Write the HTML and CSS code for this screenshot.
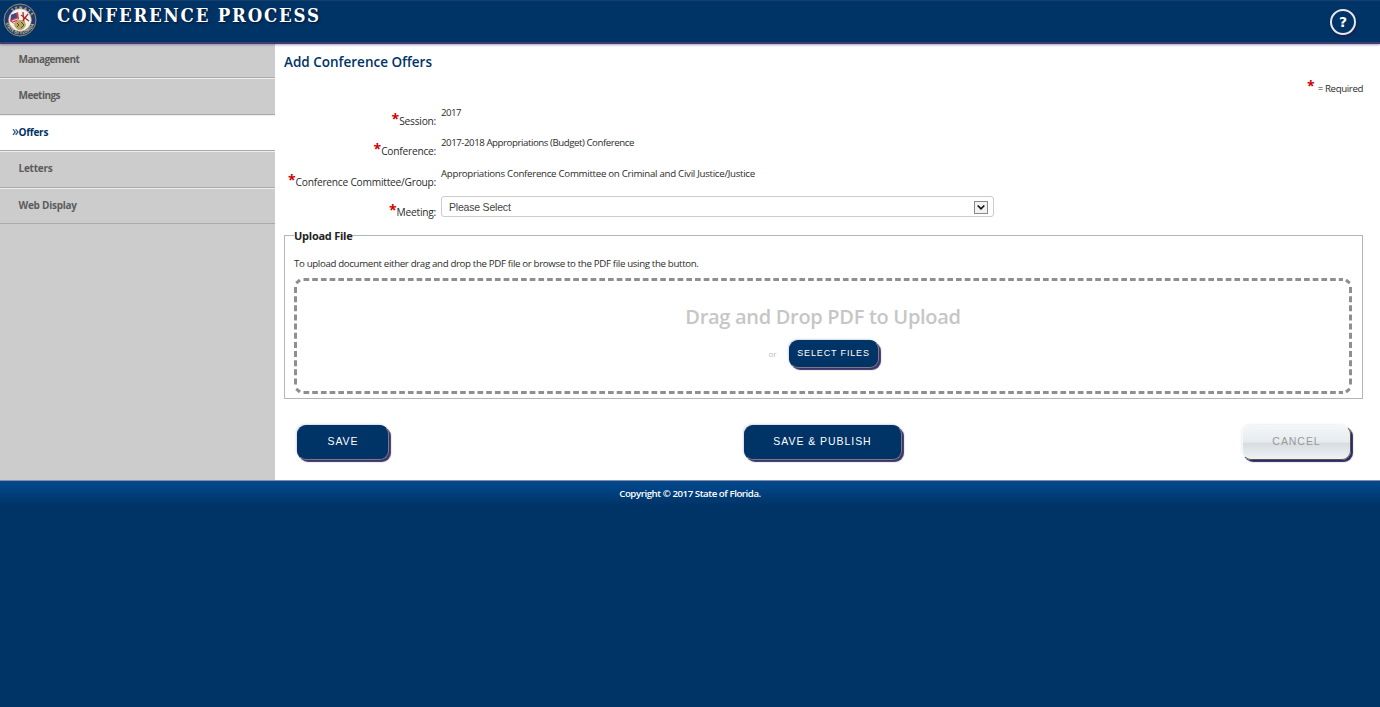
FILE: index.html
```html
<!DOCTYPE html>
<html lang="en">
<head>
<meta charset="utf-8">
<title>Conference Process</title>
<link rel="stylesheet" href="styles.css">
</head>
<body>
<header class="header">
  <svg class="seal" viewBox="0 0 34 34" width="34" height="34">
    <defs><path id="top" d="M4 19A13 13 0 1 1 30 19"/><path id="bottom" d="M2.600 20A14.800 14.800 0 0 0 31.400 20"/></defs>
    <circle cx="17" cy="17" r="16" fill="#1b3a78" stroke="#a28d5c" stroke-width="1"/>
    <text class="seal-text"><textPath href="#top" startOffset="12" textLength="22">SENATE</textPath></text>
    <text class="seal-text"><textPath href="#bottom" textLength="38">STATE OF FLORIDA</textPath></text>
    <circle cx="17" cy="17" r="11.300" fill="#f6f2ea" stroke="#c2ad78" stroke-width=".7"/>
    <path d="M8 12l7-3 1 7-5 5-4-3z" fill="#c8434b"/>
    <path d="M8 12l5-2 1 4-6 3z" fill="#394b8c"/>
    <path d="M9 18l6-2M10 20l6-2" stroke="#fff" stroke-width=".8"/>
    <path d="M20 9l1 12M25 11l-7 9M18 12l8 6" stroke="#b52632" stroke-width="1.300"/>
    <path d="M11 22q1-5 6-5t6 5q-2 5-6 5t-6-5z" fill="#b9a568"/>
    <path d="M14 20l2 2-2 2M18 19l3 3-3 3" stroke="#54502f" stroke-width="1" fill="none"/>
  </svg>
  <h1 class="title">CONFERENCE PROCESS</h1>
  <a class="help">?</a>
</header>
<div class="body">
  <nav class="nav">
    <a class="nav-item"><span class="tight">Management</span></a>
    <a class="nav-item"><span class="tight">Meetings</span></a>
    <a class="nav-item active"><i class="mark">»</i><span>Offers</span></a>
    <a class="nav-item"><span>Letters</span></a>
    <a class="nav-item"><span>Web Display</span></a>
  </nav>
  <main class="main">
    <h2 class="heading">Add Conference Offers</h2>
    <p class="required"><b class="star">*</b><span>= Required</span></p>
    <div class="form">
      <label class="label"><b class="star">*</b><span>Session:</span></label><span class="value digits">2017</span>
      <label class="label"><b class="star">*</b><span>Conference:</span></label><span class="value mixed">2017-2018 Appropriations (Budget) Conference</span>
      <label class="label"><b class="star">*</b><span>Conference Committee/Group:</span></label><span class="value">Appropriations Conference Committee on Criminal and Civil Justice/Justice</span>
      <label class="label"><b class="star">*</b><span>Meeting:</span></label>
      <div class="select"><span>Please Select</span>
        <svg width="14" height="13" viewBox="0 0 14 13"><rect x=".5" y=".5" width="13" height="12" fill="#f2f2f2" stroke="#8a8a8a"/><path d="M3.7 4.5L7 7.8l3.3-3.3" fill="none" stroke="#111" stroke-width="1.7"/></svg>
      </div>
    </div>
    <fieldset class="upload">
      <legend class="legend">Upload File</legend>
      <p class="hint">To upload document either drag and drop the PDF file or browse to the PDF file using the button.</p>
      <div class="drop">
        <svg class="dash" width="1058" height="116" fill="none" stroke="#8f8f8f" stroke-width="3">
          <path d="M9.5 1.5H1049" stroke-dasharray="5.7 3"/><path d="M9.5 114.500H1049" stroke-dasharray="5.7 3"/>
          <path d="M1.5 9V108" stroke-dasharray="6 3.15"/><path d="M1056.5 9V108" stroke-dasharray="6 3.15"/>
          <path d="M2.2 5.2L6 2M1052 2l3.8 3.2M2.2 110.800L6 114M1052 114l3.800-3.2"/>
        </svg>
        <div class="drop-title">Drag and Drop PDF to Upload</div>
        <div class="pick"><span>or</span><button class="btn small">SELECT FILES</button></div>
      </div>
    </fieldset>
    <div class="actions">
      <button class="btn save">SAVE</button>
      <button class="btn publish">SAVE &amp; PUBLISH</button>
      <button class="btn cancel">CANCEL</button>
    </div>
  </main>
</div>
<footer class="footer"><span>Copyright © 2017 State of Florida.</span></footer>
</body>
</html>
```
FILE: styles.css
```css
* { box-sizing: border-box; }
body { margin: 0; min-height: 707px; background: #003366; color: #2b2b2b; font: 9.7px/14px "Open Sans", "Noto Sans", sans-serif; overflow: hidden; }
h1, h2, p { margin: 0; }
.header { height: 44px; display: flex; align-items: flex-start; background: #003366; border-top: 1px solid #123f6e; border-bottom: 2px solid #423d70; box-shadow: 0 1px 2px #5c548b88; position: relative; z-index: 1; }
.seal { margin: 2px 0 0 3px; }
.seal-text { font: bold 4px "Open Sans", sans-serif; fill: #d8c68e; }
.title { margin: 3px 0 0 20px; color: #fff; font: bold 18.500px/24px "DejaVu Serif Condensed", "DejaVu Serif", serif; letter-spacing: 1.8px; text-shadow: 1px 1px 2px #001634; white-space: nowrap; }
.help { margin: 8px 24px 0 auto; width: 26px; height: 26px; border: 2px solid #e4e9ef; border-radius: 50%; color: #fff; font: bold 14px/23px "DejaVu Sans", sans-serif; text-align: center; box-shadow: 1px 2px 2px #1c1f50; }
.body { display: flex; height: 436px; }
.nav { width: 275px; background: #ccc; }
.nav-item { display: flex; height: 36.5px; padding: 8px 0 0 18.500px; border-bottom: 1px solid #aaa; border-top: 1.5px solid #eee; color: #5c5c5c; font-weight: 700; font-size: 10px; line-height: 17px; letter-spacing: -.25px; position: relative; }
.nav-item:first-child { height: 34px; padding-top: 7px; border-top: 0; }
.nav .tight { letter-spacing: -.55px; }
.nav-item.active { background: #fff; color: #003366; }
.mark { position: absolute; left: 12px; font-style: normal; font-weight: 400; font-size: 14px; top: 6px; }
.main { flex: 1; background: #fff; padding: 8px 17px 0 9px; }
.heading { color: #003366; font-size: 13.5px; line-height: 20px; font-weight: 600; }
.required { display: flex; justify-content: flex-end; margin-top: 9px; height: 24px; line-height: 16px; gap: 3px; letter-spacing: -.38px; }
.star { color: #d00000; font: bold 14px/14px "Open Sans", sans-serif; margin-top: -2px; letter-spacing: 0; }
.form { display: grid; grid-template-columns: 152px 553px; grid-auto-rows: 30.4px; column-gap: 5px; }
.label { display: flex; justify-content: flex-end; align-items: flex-start; padding-top: 9px; white-space: nowrap; font-size: 10.2px; letter-spacing: -.23px; }
.value { padding-top: 1px; white-space: nowrap; letter-spacing: -.28px; }
.digits { letter-spacing: -.55px; }
.mixed { letter-spacing: -.45px; }
.select { height: 21px; border: 1px solid #ccc; border-radius: 3px; display: flex; justify-content: space-between; align-items: center; padding: 1px 5px 0 7px; font: 10.500px "Liberation Sans", Arial, sans-serif; letter-spacing: -.2px; color: #444; }
.upload { margin: 1px 0 0; height: 171px; border: 1px solid #b5b5b5; padding: 14px 9px 0; min-width: 0; }
.legend { padding: 0; font-size: 11px; line-height: 15px; font-weight: 700; color: #222; letter-spacing: -.25px; }
.hint { height: 21px; line-height: 14px; white-space: nowrap; letter-spacing: -.34px; }
.drop { position: relative; height: 116px; width: 1058px; display: flex; flex-direction: column; align-items: center; padding-top: 25px; }
.dash { position: absolute; left: 0; top: 0; }
.drop-title { color: #c6c6c6; font-size: 20px; line-height: 28px; font-weight: 600; letter-spacing: -.3px; white-space: nowrap; }
.pick { display: flex; align-items: center; gap: 12px; margin: 9px 0 0 1px; color: #bbb; font-size: 8px; }
.btn { height: 35px; border: 1px solid #7c7885; border-top-color: #003366; border-left-color: #003366; border-radius: 9px; padding: 0 0 2px; background: #003366; color: #fff; font: 10.500px "Liberation Sans", Arial, sans-serif; letter-spacing: .95px; box-shadow: 2px 2px 1px #3a3468, -1px -1px 2px #d3dbe5; white-space: nowrap; }
.small { width: 90px; height: 28px; font-size: 9px; letter-spacing: .85px; }
.actions { display: flex; justify-content: space-between; margin: 26px 12px 0 13px; }
.save { width: 92px; }
.publish { width: 158px; margin-left: 14px; }
.cancel { width: 109px; color: #999; background: linear-gradient(#f3f6f8, #e7ebee 49%, #d7dce1 52%, #eef2f4); border: 1px solid #555; border-top-color: #f5f7f9; border-left-color: #f5f7f9; box-shadow: 2px 2px 1px #2c2860, -1px -1px 2px #edf0f3; }
.footer { height: 26px; border-top: 1px solid #8f88a5; background: linear-gradient(#004a8f, #003366); color: #fff; font-weight: 600; text-align: center; line-height: 25px; letter-spacing: -.45px; }
```
